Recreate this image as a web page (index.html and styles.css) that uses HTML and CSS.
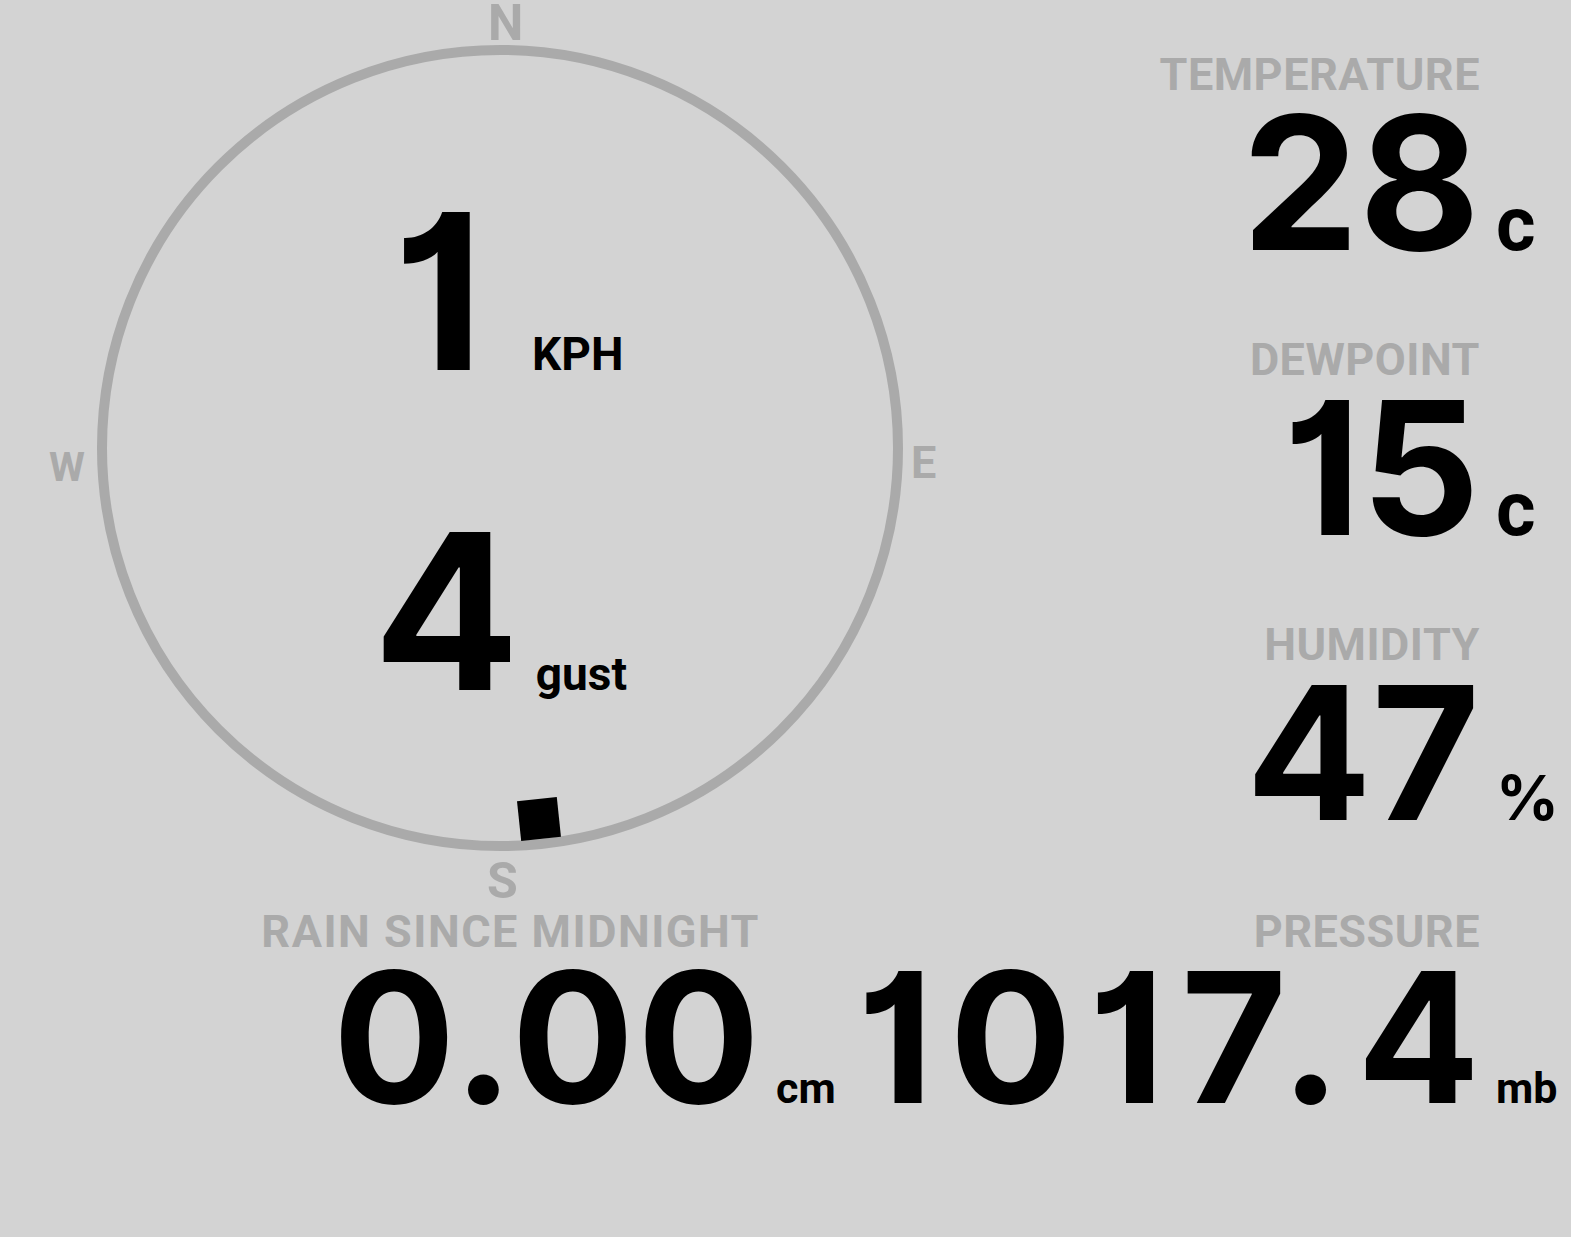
FILE: index.html
```html
<!DOCTYPE html>
<html lang="en">
<head>
    <meta charset="UTF-8">
    <meta name="viewport" content="width=device-width, initial-scale=1.0">
    <title>Weather Station</title>
    <link rel="stylesheet" href="styles.css">
</head>
<body>
    <main class="dashboard">
        <!-- Wind compass -->
        <section class="compass-panel">
            <div class="compass">
                <span class="cardinal cardinal-n">N</span>
                <span class="cardinal cardinal-e">E</span>
                <span class="cardinal cardinal-s">S</span>
                <span class="cardinal cardinal-w">W</span>

                <!-- wind direction, degrees -->
                <div class="needle" style="transform: rotate(174deg)"></div>

                <div class="wind-row wind-speed">
                    <span class="big-num">1</span>
                    <span class="wind-unit">KPH</span>
                </div>
                <div class="wind-row wind-gust">
                    <span class="big-num">4</span>
                    <span class="wind-unit">gust</span>
                </div>
            </div>
        </section>

        <!-- Readings down the right side -->
        <section class="readings">
            <div class="stat">
                <div class="stat-label">TEMPERATURE</div>
                <div class="stat-num">28</div>
                <div class="stat-unit">c</div>
            </div>
            <div class="stat">
                <div class="stat-label">DEWPOINT</div>
                <div class="stat-num">15</div>
                <div class="stat-unit">c</div>
            </div>
            <div class="stat">
                <div class="stat-label">HUMIDITY</div>
                <div class="stat-num">47</div>
                <div class="stat-unit unit-pct">%</div>
            </div>
        </section>

        <!-- Rain and pressure -->
        <section class="bottom-row">
            <div class="stat stat-wide stat-rain">
                <div class="stat-label">RAIN SINCE MIDNIGHT</div>
                <div class="stat-num">0.00</div>
                <div class="stat-unit">cm</div>
            </div>
            <div class="stat stat-wide stat-pressure">
                <div class="stat-label">PRESSURE</div>
                <div class="stat-num">1017.4</div>
                <div class="stat-unit">mb</div>
            </div>
        </section>
    </main>
</body>
</html>
```

FILE: styles.css
```css
/* Global Styles */
body {
    margin: 0;
    padding: 0;
    background: #d3d3d3;
    color: #000;
    font-family: 'Roboto', 'Liberation Sans', sans-serif;
    font-weight: bold;
}

.dashboard {
    display: grid;
    grid-template-columns: 1fr auto;
    padding-right: 5px;
}

/* Compass */
.compass-panel {
    padding: 45px 0 0 97px;
}

.compass {
    position: relative;
    width: 806px;
    height: 806px;
    box-sizing: border-box;
    border: 10px solid #aaa;
    border-radius: 50%;
    display: flex;
    flex-direction: column;
    align-items: center;
}

.cardinal {
    position: absolute;
    color: #aaa;
    line-height: 0.8;
}

.cardinal-n {
    font-size: 50px;
    top: -52px;
    left: 381px;
}

.cardinal-e {
    font-size: 45px;
    top: 390px;
    left: 804px;
}

.cardinal-s {
    font-size: 50px;
    top: 806px;
    left: 380px;
}

.cardinal-w {
    font-size: 41px;
    top: 396px;
    left: -58px;
}

.needle {
    position: absolute;
    inset: 0;
}

.needle::before {
    content: "";
    position: absolute;
    top: 0;
    left: 373px;
    width: 40px;
    height: 40px;
    background: #000;
}

.wind-row {
    display: flex;
    align-items: baseline;
}

.wind-speed {
    margin-top: 142px;
    padding-left: 16px;
}

.wind-gust {
    margin-top: 131px;
}

/* big figures: curved-flag one */
.big-num,
.stat-num {
    font-family: 'Inter', 'Liberation Sans', sans-serif;
    font-feature-settings: "cv01" 1;
}

.big-num {
    font-size: 217px;
    line-height: 0.87;
    margin-right: 16px;
}

.wind-speed .big-num {
    margin-right: 48px;
}

.wind-unit {
    font-size: 46px;
    line-height: 1;
}

/* Readings */
.readings {
    padding-top: 52px;
}

.stat {
    display: grid;
    grid-template-columns: auto 70px;
    column-gap: 16px;
    align-items: baseline;
    margin-bottom: 69px;
}

.stat-label {
    grid-column: 1;
    justify-self: end;
    color: #aaa;
    font-size: 45px;
    line-height: 1;
    letter-spacing: 0.5px;
}

.stat-num {
    grid-column: 1;
    justify-self: end;
    font-size: 186px;
    line-height: 0.92;
}

.stat-unit {
    grid-column: 2;
    justify-self: start;
    font-size: 76px;
    line-height: 1;
}

.unit-pct {
    font-family: 'Inter', 'Roboto', sans-serif;
    font-size: 62px;
}

/* Bottom row */
.bottom-row {
    grid-column: 1 / -1;
    display: flex;
    justify-content: flex-end;
    margin-top: 2px;
}

.stat-wide {
    margin-bottom: 0;
}

.stat-wide .stat-num {
    font-size: 182px;
}

.stat-wide .stat-unit {
    font-size: 43px;
}

/* the cm unit tucks in under the pressure figure */
.stat-rain {
    grid-template-columns: auto 28px;
}

.stat-rain .stat-label {
    letter-spacing: 1.5px;
}

.stat-rain .stat-num {
    letter-spacing: 3px;
    margin-right: -3px;
}

.stat-pressure {
    grid-template-columns: 676px 70px;
}

.stat-pressure .stat-num {
    letter-spacing: 16px;
    margin-right: -16px;
}
```
